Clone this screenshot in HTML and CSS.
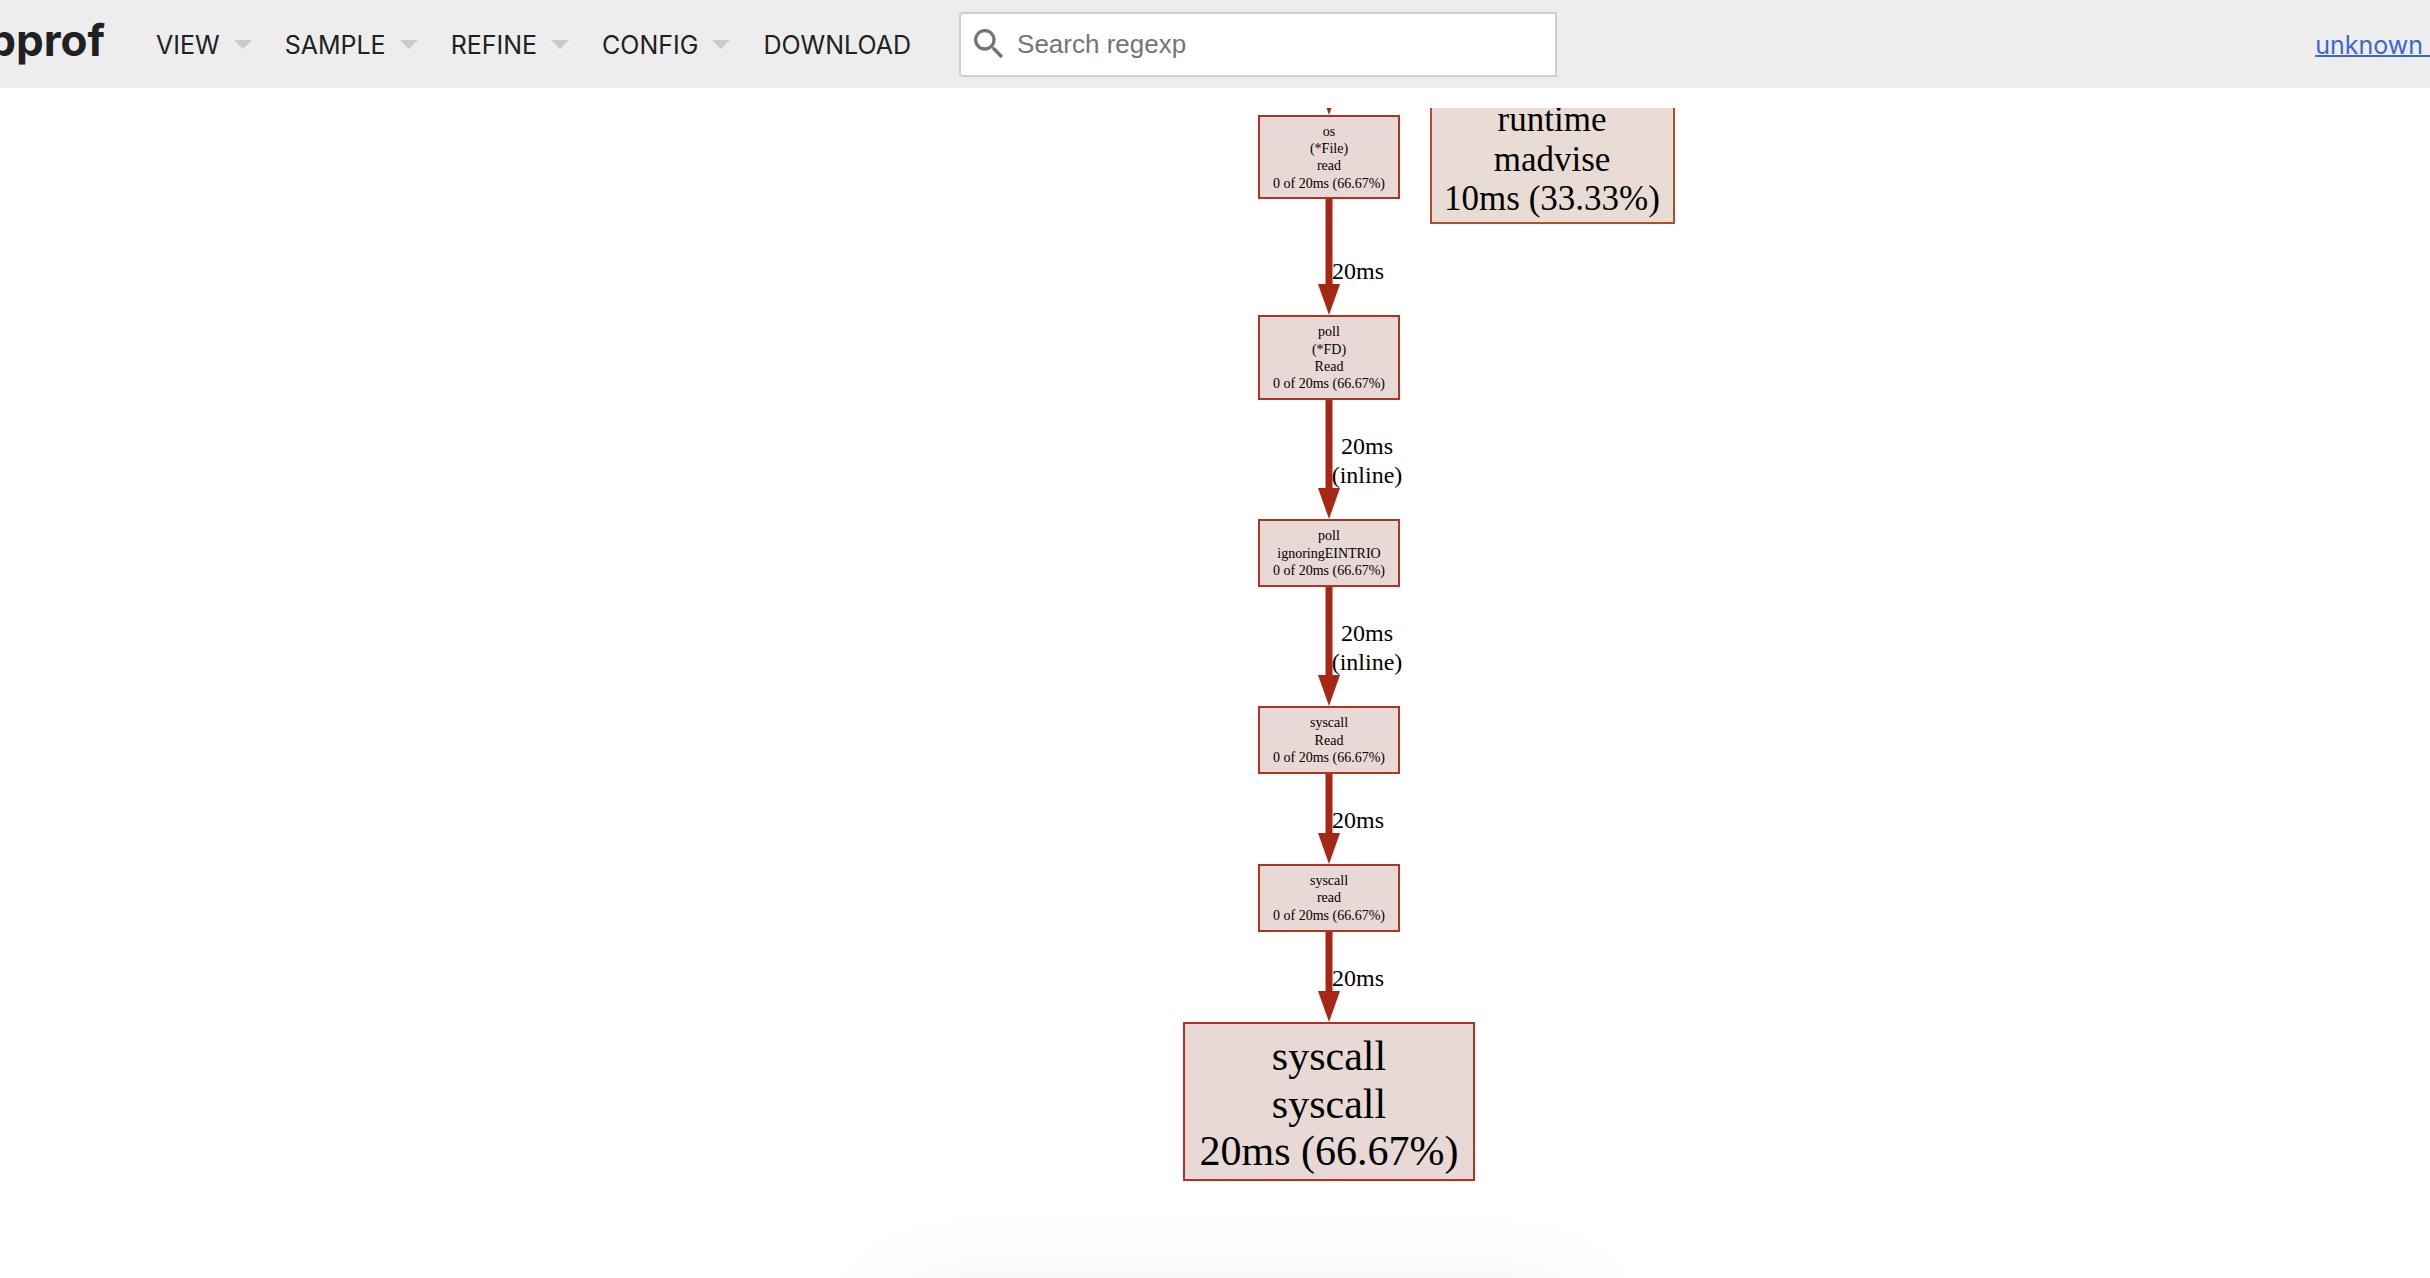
FILE: index.html
```html
<!DOCTYPE html>
<html lang="en">
<head>
<meta charset="utf-8">
<title>unknown</title>
<link rel="stylesheet" href="styles.css">
</head>
<body>
<div class="app">
<header class="header">
  <h1 class="title">pprof</h1>
  <nav class="menu">
    <button class="menu-item" type="button">VIEW<span class="caret"></span></button>
    <button class="menu-item" type="button">SAMPLE<span class="caret"></span></button>
    <button class="menu-item" type="button">REFINE<span class="caret"></span></button>
    <button class="menu-item" type="button">CONFIG<span class="caret"></span></button>
    <button class="menu-item" type="button">DOWNLOAD</button>
  </nav>
  <label class="search">
    <svg class="search-icon" viewBox="3 3 18 18" aria-hidden="true"><path d="M15.5 14h-.79l-.28-.27A6.47 6.47 0 0 0 16 9.5 6.5 6.5 0 1 0 9.5 16c1.61 0 3.09-.59 4.23-1.57l.27.28v.79l5 4.99L20.49 19l-4.99-5zm-6 0C7.01 14 5 11.99 5 9.5S7.01 5 9.5 5 14 7.01 14 9.5 11.99 14 9.5 14z"/></svg>
    <input class="search-input" type="text" placeholder="Search regexp" aria-label="Search regexp">
  </label>
  <a class="profile" href="#">unknown&nbsp;</a>
</header>
<main class="graph">
  <svg class="graph-svg" viewBox="0 0 2430 1170" role="img" aria-label="Call graph">
    <defs>
      <path id="head" class="arrow" d="M-11 -31H11L0 0Z"/>
    </defs>
    <g class="edges">
      <use href="#head" x="1329" y="7"/>
      <path class="edge" d="M1329 91V177"/><use href="#head" x="1329" y="207"/>
      <path class="edge" d="M1329 292V382"/><use href="#head" x="1329" y="411"/>
      <path class="edge" d="M1329 478V568"/><use href="#head" x="1329" y="598"/>
      <path class="edge" d="M1329 665V726"/><use href="#head" x="1329" y="756"/>
      <path class="edge" d="M1329 823V884"/><use href="#head" x="1329" y="914"/>
    </g>
    <g class="nodes">
      <rect class="node" x="1259" y="8" width="140" height="82"/>
      <rect class="node" x="1259" y="208" width="140" height="83"/>
      <rect class="node" x="1259" y="412" width="140" height="66"/>
      <rect class="node" x="1259" y="599" width="140" height="66"/>
      <rect class="node" x="1259" y="757" width="140" height="66"/>
      <rect class="node" x="1184" y="915" width="290" height="157"/>
      <rect class="node node-warm" x="1431" y="-60" width="243" height="175"/>
    </g>
    <g class="text small">
      <text x="1329" y="28">os</text><text x="1329" y="45">(*File)</text><text x="1329" y="62">read</text><text x="1329" y="80">0 of 20ms (66.67%)</text>
      <text x="1329" y="228">poll</text><text x="1329" y="246">(*FD)</text><text x="1329" y="263">Read</text><text x="1329" y="280">0 of 20ms (66.67%)</text>
      <text x="1329" y="432">poll</text><text x="1329" y="450">ignoringEINTRIO</text><text x="1329" y="467">0 of 20ms (66.67%)</text>
      <text x="1329" y="619">syscall</text><text x="1329" y="637">Read</text><text x="1329" y="654">0 of 20ms (66.67%)</text>
      <text x="1329" y="777">syscall</text><text x="1329" y="794">read</text><text x="1329" y="812">0 of 20ms (66.67%)</text>
    </g>
    <g class="text label">
      <text x="1358" y="171">20ms</text>
      <text x="1367" y="346">20ms</text><text x="1367" y="375">(inline)</text>
      <text x="1367" y="533">20ms</text><text x="1367" y="562">(inline)</text>
      <text x="1358" y="720">20ms</text>
      <text x="1358" y="878">20ms</text>
    </g>
    <g class="text medium">
      <text x="1552" y="23">runtime</text><text x="1552" y="63">madvise</text><text x="1552" y="102">10ms (33.33%)</text>
    </g>
    <g class="text large">
      <text x="1329" y="962">syscall</text><text x="1329" y="1010">syscall</text><text x="1329" y="1057">20ms (66.67%)</text>
    </g>
  </svg>
</main>
<div class="shade"></div>
</div>
</body>
</html>
```
FILE: styles.css
```css
* { box-sizing: border-box; }
body {
  margin: 0;
  background: #fff;
  color: #212121;
  font: 25px/32px Inter, "Liberation Sans", sans-serif;
}
.app {
  position: relative;
  height: 100vh;
  overflow: hidden;
}
.header {
  display: flex;
  align-items: center;
  height: 88px;
  background: #ededed;
}
.title {
  display: flex;
  justify-content: flex-end;
  width: 105px;
  margin: 0;
  padding-bottom: 8px;
  font-size: 44px;
  line-height: 56px;
}
.menu {
  display: flex;
  gap: 33px;
  margin-left: 51px;
  padding-top: 2px;
}
.menu-item {
  display: flex;
  align-items: center;
  gap: 14px;
  padding: 0;
  border: 0;
  background: none;
  color: inherit;
  font: inherit;
}
.caret {
  margin-bottom: 2px;
  border: 9px solid transparent;
  border-top-color: #cacaca;
  border-bottom: 0;
}
.search {
  display: flex;
  align-items: center;
  gap: 13px;
  width: 598px;
  height: 65px;
  margin-left: 48px;
  padding-left: 13px;
  border: 2px solid #d0d0d0;
  border-radius: 4px 0 0 4px;
  background: #fff;
}
.search-icon {
  width: 30px;
  height: 30px;
  fill: #757575;
}
.search-input {
  flex: 1;
  min-width: 0;
  padding: 0;
  border: 0;
  outline: 0;
  background: none;
  font: 26px/32px "Liberation Sans", sans-serif;
}
.search-input::placeholder { color: #757575; }
.profile {
  margin-left: auto;
  padding-top: 2px;
  color: #3b67d6;
  text-decoration-thickness: 2px;
  white-space: nowrap;
}
.graph { padding-top: 20px; }
.graph-svg {
  display: block;
  width: 100%;
  overflow: hidden;
}
.edge { stroke: #a52714; stroke-width: 7; }
.arrow { fill: #a52714; }
.node { fill: #e8d9d6; stroke: #b03422; stroke-width: 2; }
.node-warm { fill: #e9dcd5; stroke: #b04e2c; }
.text {
  fill: #000;
  font-family: "Liberation Serif", serif;
  text-anchor: middle;
}
.small { font-size: 14px; }
.label { font-size: 24px; }
.medium { font-size: 35px; }
.large { font-size: 42px; }
.shade {
  position: absolute;
  top: calc(100% + 20px);
  left: 50%;
  width: 680px;
  height: 200px;
  margin-left: -320px;
  box-shadow: 0 0 100px rgba(0, 0, 0, 0.08);
}
```
